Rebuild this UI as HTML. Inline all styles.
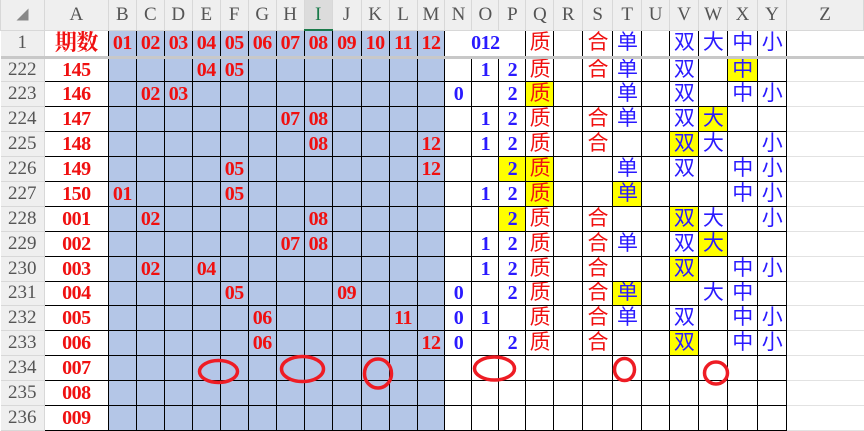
<!DOCTYPE html>
<html><head><meta charset="utf-8"><style>
body{margin:0;width:864px;height:415px;overflow:hidden;background:#fff;font-family:"Liberation Serif","Noto Serif CJK SC",serif;}
table{border-collapse:collapse;table-layout:fixed;position:absolute;left:0;top:0;}
td,th{padding:0;overflow:hidden;white-space:nowrap;text-align:center;height:24.9px;line-height:20px;box-sizing:border-box;}
thead th{height:30px;background:#efefef;color:#555;font-weight:normal;font-size:19px;border:1px solid #d8d8d8;border-top:none;}
thead th.sel{background:#dcdcdc;color:#1a7a4a;border-bottom:2px solid #1a7a4a;}
tbody th{background:#efefef;color:#555;font-weight:normal;font-size:19px;border:1px solid #d8d8d8;border-left:none;}
td{border:1px solid #000;font-weight:bold;font-size:20px;color:#f01010;letter-spacing:-0.5px;}
td.a{background:#fff;}
td.b{background:#b4c6e7;}
td.u{color:#2a1aff;}
td.y{background:#ffff00;}
td.z{border:1px solid #e2e2e2;border-right:none;}
td.c{font-weight:normal;font-size:21px;font-family:"Liberation Sans","Noto Sans CJK SC",sans-serif;}
tr.r1 td,tr.r1 th{border-bottom:3px solid #c8c8c8;height:27px;}
svg{position:absolute;left:0;top:0;}
</style></head><body>
<table>
<colgroup><col style="width:44px"><col style="width:64px">
<col style="width:28px"><col style="width:28px"><col style="width:28px"><col style="width:28px"><col style="width:28px"><col style="width:28px"><col style="width:28px"><col style="width:28px"><col style="width:29px"><col style="width:28px"><col style="width:28px"><col style="width:28px">
<col style="width:27px"><col style="width:27px"><col style="width:27px"><col style="width:28px"><col style="width:29px"><col style="width:30px"><col style="width:29px"><col style="width:28px"><col style="width:29px"><col style="width:29px"><col style="width:30px"><col style="width:29px"><col style="width:77px"></colgroup>
<thead><tr><th style="color:#888;font-size:12px">◢</th><th>A</th><th>B</th><th>C</th><th>D</th><th>E</th><th>F</th><th>G</th><th>H</th><th class="sel">I</th><th>J</th><th>K</th><th>L</th><th>M</th><th>N</th><th>O</th><th>P</th><th>Q</th><th>R</th><th>S</th><th>T</th><th>U</th><th>V</th><th>W</th><th>X</th><th>Y</th><th>Z</th></tr></thead>
<tbody>
<tr class="r1"><th>1</th><td class="a" style="font-size:22px">期数</td><td class="b">01</td><td class="b">02</td><td class="b">03</td><td class="b">04</td><td class="b">05</td><td class="b">06</td><td class="b">07</td><td class="b">08</td><td class="b">09</td><td class="b">10</td><td class="b">11</td><td class="b">12</td><td colspan="3" class="u" style="border-bottom-color:#c8c8c8">012</td><td class="c">质</td><td></td><td class="c">合</td><td class="u c">单</td><td></td><td class="u c">双</td><td class="u c">大</td><td class="u c">中</td><td class="u c">小</td><td class="z"></td></tr>
<tr><th>222</th><td class="a">145</td><td class="b"></td><td class="b"></td><td class="b"></td><td class="b">04</td><td class="b">05</td><td class="b"></td><td class="b"></td><td class="b"></td><td class="b"></td><td class="b"></td><td class="b"></td><td class="b"></td><td class="u"></td><td class="u">1</td><td class="u">2</td><td class="c">质</td><td></td><td class="c">合</td><td class="u c">单</td><td></td><td class="u c">双</td><td class="u c"></td><td class="u c y">中</td><td class="u c"></td><td class="z"></td></tr>
<tr><th>223</th><td class="a">146</td><td class="b"></td><td class="b">02</td><td class="b">03</td><td class="b"></td><td class="b"></td><td class="b"></td><td class="b"></td><td class="b"></td><td class="b"></td><td class="b"></td><td class="b"></td><td class="b"></td><td class="u">0</td><td class="u"></td><td class="u">2</td><td class="c y">质</td><td></td><td class="c"></td><td class="u c">单</td><td></td><td class="u c">双</td><td class="u c"></td><td class="u c">中</td><td class="u c">小</td><td class="z"></td></tr>
<tr><th>224</th><td class="a">147</td><td class="b"></td><td class="b"></td><td class="b"></td><td class="b"></td><td class="b"></td><td class="b"></td><td class="b">07</td><td class="b">08</td><td class="b"></td><td class="b"></td><td class="b"></td><td class="b"></td><td class="u"></td><td class="u">1</td><td class="u">2</td><td class="c">质</td><td></td><td class="c">合</td><td class="u c">单</td><td></td><td class="u c">双</td><td class="u c y">大</td><td class="u c"></td><td class="u c"></td><td class="z"></td></tr>
<tr><th>225</th><td class="a">148</td><td class="b"></td><td class="b"></td><td class="b"></td><td class="b"></td><td class="b"></td><td class="b"></td><td class="b"></td><td class="b">08</td><td class="b"></td><td class="b"></td><td class="b"></td><td class="b">12</td><td class="u"></td><td class="u">1</td><td class="u">2</td><td class="c">质</td><td></td><td class="c">合</td><td class="u c"></td><td></td><td class="u c y">双</td><td class="u c">大</td><td class="u c"></td><td class="u c">小</td><td class="z"></td></tr>
<tr><th>226</th><td class="a">149</td><td class="b"></td><td class="b"></td><td class="b"></td><td class="b"></td><td class="b">05</td><td class="b"></td><td class="b"></td><td class="b"></td><td class="b"></td><td class="b"></td><td class="b"></td><td class="b">12</td><td class="u"></td><td class="u"></td><td class="u y">2</td><td class="c y">质</td><td></td><td class="c"></td><td class="u c">单</td><td></td><td class="u c">双</td><td class="u c"></td><td class="u c">中</td><td class="u c">小</td><td class="z"></td></tr>
<tr><th>227</th><td class="a">150</td><td class="b">01</td><td class="b"></td><td class="b"></td><td class="b"></td><td class="b">05</td><td class="b"></td><td class="b"></td><td class="b"></td><td class="b"></td><td class="b"></td><td class="b"></td><td class="b"></td><td class="u"></td><td class="u">1</td><td class="u">2</td><td class="c y">质</td><td></td><td class="c"></td><td class="u c y">单</td><td></td><td class="u c"></td><td class="u c"></td><td class="u c">中</td><td class="u c">小</td><td class="z"></td></tr>
<tr><th>228</th><td class="a">001</td><td class="b"></td><td class="b">02</td><td class="b"></td><td class="b"></td><td class="b"></td><td class="b"></td><td class="b"></td><td class="b">08</td><td class="b"></td><td class="b"></td><td class="b"></td><td class="b"></td><td class="u"></td><td class="u"></td><td class="u y">2</td><td class="c">质</td><td></td><td class="c">合</td><td class="u c"></td><td></td><td class="u c y">双</td><td class="u c">大</td><td class="u c"></td><td class="u c">小</td><td class="z"></td></tr>
<tr><th>229</th><td class="a">002</td><td class="b"></td><td class="b"></td><td class="b"></td><td class="b"></td><td class="b"></td><td class="b"></td><td class="b">07</td><td class="b">08</td><td class="b"></td><td class="b"></td><td class="b"></td><td class="b"></td><td class="u"></td><td class="u">1</td><td class="u">2</td><td class="c">质</td><td></td><td class="c">合</td><td class="u c">单</td><td></td><td class="u c">双</td><td class="u c y">大</td><td class="u c"></td><td class="u c"></td><td class="z"></td></tr>
<tr><th>230</th><td class="a">003</td><td class="b"></td><td class="b">02</td><td class="b"></td><td class="b">04</td><td class="b"></td><td class="b"></td><td class="b"></td><td class="b"></td><td class="b"></td><td class="b"></td><td class="b"></td><td class="b"></td><td class="u"></td><td class="u">1</td><td class="u">2</td><td class="c">质</td><td></td><td class="c">合</td><td class="u c"></td><td></td><td class="u c y">双</td><td class="u c"></td><td class="u c">中</td><td class="u c">小</td><td class="z"></td></tr>
<tr><th>231</th><td class="a">004</td><td class="b"></td><td class="b"></td><td class="b"></td><td class="b"></td><td class="b">05</td><td class="b"></td><td class="b"></td><td class="b"></td><td class="b">09</td><td class="b"></td><td class="b"></td><td class="b"></td><td class="u">0</td><td class="u"></td><td class="u">2</td><td class="c">质</td><td></td><td class="c">合</td><td class="u c y">单</td><td></td><td class="u c"></td><td class="u c">大</td><td class="u c">中</td><td class="u c"></td><td class="z"></td></tr>
<tr><th>232</th><td class="a">005</td><td class="b"></td><td class="b"></td><td class="b"></td><td class="b"></td><td class="b"></td><td class="b">06</td><td class="b"></td><td class="b"></td><td class="b"></td><td class="b"></td><td class="b">11</td><td class="b"></td><td class="u">0</td><td class="u">1</td><td class="u"></td><td class="c">质</td><td></td><td class="c">合</td><td class="u c">单</td><td></td><td class="u c">双</td><td class="u c"></td><td class="u c">中</td><td class="u c">小</td><td class="z"></td></tr>
<tr><th>233</th><td class="a">006</td><td class="b"></td><td class="b"></td><td class="b"></td><td class="b"></td><td class="b"></td><td class="b">06</td><td class="b"></td><td class="b"></td><td class="b"></td><td class="b"></td><td class="b"></td><td class="b">12</td><td class="u">0</td><td class="u"></td><td class="u">2</td><td class="c">质</td><td></td><td class="c">合</td><td class="u c"></td><td></td><td class="u c y">双</td><td class="u c"></td><td class="u c">中</td><td class="u c">小</td><td class="z"></td></tr>
<tr><th>234</th><td class="a">007</td><td class="b"></td><td class="b"></td><td class="b"></td><td class="b"></td><td class="b"></td><td class="b"></td><td class="b"></td><td class="b"></td><td class="b"></td><td class="b"></td><td class="b"></td><td class="b"></td><td></td><td></td><td></td><td></td><td></td><td></td><td></td><td></td><td></td><td></td><td></td><td></td><td class="z"></td></tr>
<tr><th>235</th><td class="a">008</td><td class="b"></td><td class="b"></td><td class="b"></td><td class="b"></td><td class="b"></td><td class="b"></td><td class="b"></td><td class="b"></td><td class="b"></td><td class="b"></td><td class="b"></td><td class="b"></td><td></td><td></td><td></td><td></td><td></td><td></td><td></td><td></td><td></td><td></td><td></td><td></td><td class="z"></td></tr>
<tr><th>236</th><td class="a">009</td><td class="b"></td><td class="b"></td><td class="b"></td><td class="b"></td><td class="b"></td><td class="b"></td><td class="b"></td><td class="b"></td><td class="b"></td><td class="b"></td><td class="b"></td><td class="b"></td><td></td><td></td><td></td><td></td><td></td><td></td><td></td><td></td><td></td><td></td><td></td><td></td><td class="z"></td></tr>
</tbody></table>
<svg width="864" height="415" viewBox="0 0 864 415"><g fill="none" stroke="#ee1c24" stroke-width="3.5">
<ellipse cx="218.5" cy="371.5" rx="19" ry="11"/>
<ellipse cx="302.5" cy="369" rx="21" ry="12.5"/>
<ellipse cx="378" cy="373.5" rx="13.5" ry="14.5"/>
<ellipse cx="494.5" cy="368.5" rx="20" ry="11.5"/>
<ellipse cx="624.5" cy="369.5" rx="10" ry="11"/>
<ellipse cx="716" cy="373" rx="11.5" ry="11"/>
</g></svg>
</body></html>
